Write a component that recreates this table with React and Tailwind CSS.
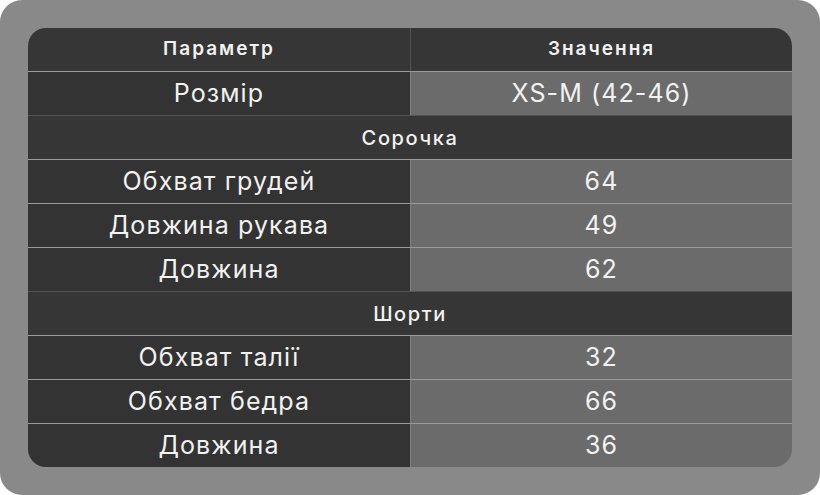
import React from "react";

const font = { fontFamily: "Inter, 'Noto Sans', sans-serif" };

const rows = [
  { type: "row", label: "Розмір", value: "XS-M (42-46)" },
  { type: "section", label: "Сорочка" },
  { type: "row", label: "Обхват грудей", value: "64" },
  { type: "row", label: "Довжина рукава", value: "49" },
  { type: "row", label: "Довжина", value: "62" },
  { type: "section", label: "Шорти" },
  { type: "row", label: "Обхват талії", value: "32" },
  { type: "row", label: "Обхват бедра", value: "66" },
  { type: "row", label: "Довжина", value: "36" },
];

const App = () => {
  return (
    <div className="bg-white w-[820px] h-[495px]">
      <div
        className="w-[820px] h-[495px] bg-[#898989] rounded-[22px] p-[28px]"
        style={font}
      >
        <div className="rounded-[18px] overflow-hidden flex flex-col text-[#f2f2f2]">
          {/* header */}
          <div className="grid grid-cols-2 h-[43px] bg-[#363636] text-[19px] font-semibold tracking-[2px]">
            <div className="flex items-center justify-center">Параметр</div>
            <div className="flex items-center justify-center border-l border-white/15">
              Значення
            </div>
          </div>

          {rows.map((row, i) =>
            row.type === "section" ? (
              <div
                key={i}
                className="h-[44px] border-t border-white/15 bg-[#363636] flex items-center justify-center text-[20px] font-medium tracking-[1.6px]"
              >
                {row.label}
              </div>
            ) : (
              <div
                key={i}
                className="grid grid-cols-2 h-[44px] border-t border-white/15 text-[25px] font-normal tracking-[1.1px]"
              >
                <div className="flex items-center justify-center bg-[#333333]">
                  {row.label}
                </div>
                <div className="flex items-center justify-center bg-[#6b6b6b] border-l border-white/15">
                  {row.value}
                </div>
              </div>
            )
          )}
        </div>
      </div>
    </div>
  );
};

export default App;
